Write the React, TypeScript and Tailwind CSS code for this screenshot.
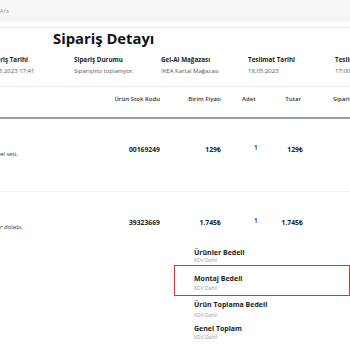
import React from 'react';

const info = [
  { label: 'Sipariş Tarihi', value: '15.05.2023 17:41' },
  { label: 'Sipariş Durumu', value: 'Siparişiniz toplanıyor.' },
  { label: 'Gel-Al Mağazası', value: 'IKEA Kartal Mağazası' },
  { label: 'Teslimat Tarihi', value: '18.05.2023' },
  { label: 'Teslimat Saati', value: '17:00 - 21:00' },
];

const rows = [
  { name: 'el seti,', code: '00169249', price: '129₺', qty: '1', total: '129₺', pt: 'pt-[27px]', h: 'h-[73px]' },
  { name: 'r dolabı,', code: '39323669', price: '1.745₺', qty: '1', total: '1.745₺', pt: 'pt-[27px]', h: 'h-[55px]' },
];

const OrderDetail = () => {
  return (
    <div className="w-[350px] h-[350px] overflow-hidden bg-white text-[#222] font-['Open_Sans',sans-serif]">
      {/* Search */}
      <div className="h-[22px] bg-[#f5f5f5] flex items-center">
        <span className="text-[5.5px] text-[#9a9a9a]">Ara</span>
      </div>
      <div className="h-[6px] border-b border-[#eeeeee]" />

      {/* Title */}
      <h1 className="pl-[53px] mt-[1px] text-[14.8px] leading-[18px] font-bold text-[#111]">Sipariş Detayı</h1>

      {/* Info */}
      <div className="flex -ml-[13px] mt-[9px] pb-[11px] border-b border-[#eeeeee] whitespace-nowrap">
        {info.map((i) => (
          <div key={i.label} className="w-[87px] shrink-0">
            <div className="text-[6.3px] leading-[8px] font-bold text-[#222]">{i.label}</div>
            <div className="mt-[3px] text-[6px] leading-[8px] text-[#555]">{i.value}</div>
          </div>
        ))}
      </div>

      {/* Table header */}
      <div className="flex h-[30px] pt-[8px] text-[6px] leading-[8px] font-semibold text-[#333] whitespace-nowrap">
        <div className="w-[110px] shrink-0" />
        <div className="w-[50px] shrink-0 text-right">Ürün Stok Kodu</div>
        <div className="w-[61px] shrink-0 text-right">Birim Fiyatı</div>
        <div className="w-[54px] shrink-0 pl-[21px]">Adet</div>
        <div className="w-[26px] shrink-0 text-right">Tutar</div>
        <div className="ml-[32px] shrink-0">Sipariş Durumu</div>
      </div>
      <div className="h-[2px] bg-[#8c9dad]" />

      {/* Rows */}
      {rows.map((r, idx) => (
        <div
          key={r.code}
          className={`flex ${r.h} ${r.pt} whitespace-nowrap ${idx === 0 ? 'border-b border-[#f0f0f0]' : ''}`}
        >
          <div className="w-[110px] shrink-0 pt-[4px] text-[6px] leading-[8px] text-[#333]">{r.name}</div>
          <div className="w-[50px] shrink-0 text-right text-[6.8px] leading-[8px] font-bold">{r.code}</div>
          <div className="w-[61px] shrink-0 text-right text-[6.8px] leading-[8px] font-bold">{r.price}</div>
          <div className="w-[54px] shrink-0 pl-[33px] -mt-[2px] text-[6.5px] leading-[8px] font-semibold">{r.qty}</div>
          <div className="w-[28px] shrink-0 text-right text-[6.8px] leading-[8px] font-bold">{r.total}</div>
        </div>
      ))}

      {/* Summary */}
      <div className="ml-[174px] mt-[1px] whitespace-nowrap">
        <div className="pl-[20px]">
          <div className="text-[7px] leading-[9px] font-bold text-[#222]">Ürünler Bedeli</div>
          <div className="text-[5px] leading-[7px] text-[#999]">KDV Dahil</div>
        </div>
        <div className="mt-[1px] border border-[#d3353c] pl-[19px] pt-[8px] pb-[3px]">
          <div className="text-[7px] leading-[9px] font-bold text-[#222]">Montaj Bedeli</div>
          <div className="mt-[2px] text-[5px] leading-[7px] text-[#999]">KDV Dahil</div>
        </div>
        <div className="pl-[20px] pt-[4px]">
          <div className="text-[7px] leading-[9px] font-bold text-[#222]">Ürün Toplama Bedeli</div>
          <div className="mt-[3px] text-[5px] leading-[7px] text-[#999]">KDV Dahil</div>
        </div>
        <div className="pl-[20px] pt-[5px]">
          <div className="text-[7px] leading-[9px] font-bold text-[#222]">Genel Toplam</div>
          <div className="mt-[1px] text-[5px] leading-[7px] text-[#999]">KDV Dahil</div>
        </div>
      </div>
    </div>
  );
};

export default function App() {
  return <OrderDetail />;
}
